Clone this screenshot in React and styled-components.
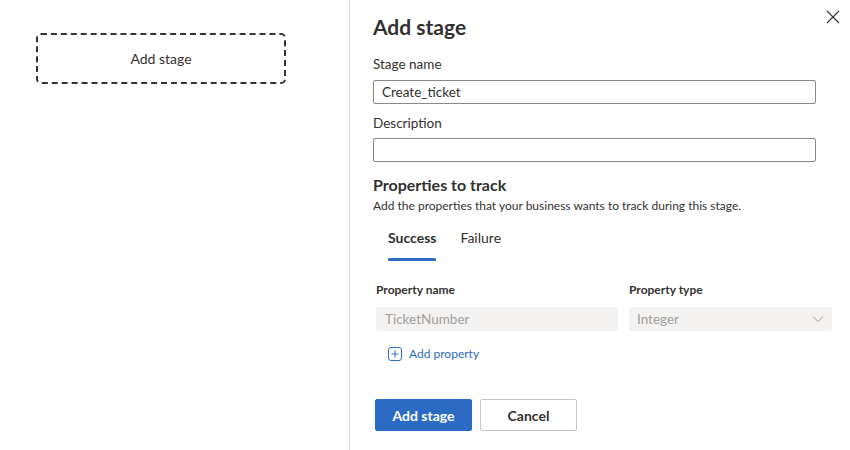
import React from "react";
import styled, { createGlobalStyle } from "styled-components";

const Global = createGlobalStyle`
  html, body { margin: 0; padding: 0; background: #fff; }
  body { font-family: "Segoe UI", Lato, "Noto Sans", sans-serif; color: #323130; }
  * { box-sizing: border-box; }
`;

const Page = styled.div`
  display: flex;
  width: 850px;
  height: 450px;
  overflow: hidden;
`;

const Canvas = styled.div`
  width: 350px;
  border-right: 1px solid #e1dfdd;
  padding: 33px 0 0 36px;
`;

const DashedStage = styled.div`
  width: 250px;
  height: 51px;
  border: 2px dashed #333;
  border-radius: 5px;
  display: flex;
  align-items: center;
  justify-content: center;
  font-size: 14px;
  color: #323130;
`;

const Panel = styled.div`
  position: relative;
  flex: 1;
  padding: 13px 0 0 23px;
  display: flex;
  flex-direction: column;
  align-items: flex-start;
`;

const Close = styled.button`
  position: absolute;
  top: 7px;
  right: 7px;
  width: 20px;
  height: 20px;
  border: 0;
  background: none;
  padding: 0;
  display: flex;
  align-items: center;
  justify-content: center;
`;

const Title = styled.h1`
  margin: 0;
  font-size: 21px;
  font-weight: 700;
  line-height: 28px;
  color: #323130;
`;

const Label = styled.label`
  display: block;
  font-size: 13.5px;
  line-height: 20px;
  margin-top: ${(p) => p.$mt}px;
  margin-bottom: ${(p) => p.$mb}px;
`;

const TextInput = styled.div`
  width: 443px;
  height: 24px;
  border: 1px solid #8a8886;
  border-radius: 2px;
  padding: 0 8px;
  font-size: 13.5px;
  line-height: 22px;
  color: #323130;
`;

const SectionTitle = styled.h2`
  margin: 12px 0 0;
  font-size: 16px;
  font-weight: 700;
  line-height: 22px;
`;

const SubText = styled.p`
  margin: 2px 0 0;
  font-size: 12px;
  line-height: 16px;
`;

const Tabs = styled.div`
  display: flex;
  margin: 14px 0 0 3px;
`;

const Tab = styled.div`
  padding: 0 12px;
  height: 33px;
  font-size: 14px;
  line-height: 20px;
  font-weight: ${(p) => (p.$active ? 700 : 400)};
  color: #323130;
  position: relative;
  &::after {
    content: "";
    position: absolute;
    left: 12px;
    right: 12px;
    bottom: 0;
    height: 3px;
    background: ${(p) => (p.$active ? "#2b6cc4" : "transparent")};
    border-radius: 1px;
  }
`;

const TableHead = styled.div`
  display: grid;
  grid-template-columns: 253px 203px;
  margin: 19px 0 0 3px;
  font-size: 12px;
  font-weight: 700;
  line-height: 20px;
`;

const Row = styled.div`
  display: grid;
  grid-template-columns: 242px 203px;
  column-gap: 11px;
  margin: 7px 0 0 3px;
`;

const DisabledField = styled.div`
  height: 24px;
  background: #f3f2f1;
  border-radius: 2px;
  color: #a19f9d;
  font-size: 13.5px;
  line-height: 24px;
  padding: 0 ${(p) => (p.$select ? 8 : 9)}px;
  display: flex;
  align-items: center;
  justify-content: space-between;
`;

const AddProperty = styled.div`
  display: flex;
  align-items: center;
  gap: 7px;
  margin: 15px 0 0 15px;
  font-size: 12px;
  color: #2b6cc4;
  line-height: 16px;
`;

const Buttons = styled.div`
  display: flex;
  gap: 8px;
  margin: 37px 0 0 2px;
`;

const Button = styled.button`
  width: 97px;
  height: 32px;
  border-radius: 2px;
  font-family: inherit;
  font-size: 14px;
  font-weight: 700;
  border: 1px solid ${(p) => (p.$primary ? "#2c6bc3" : "#c8c6c4")};
  background: ${(p) => (p.$primary ? "#2c6bc3" : "#fff")};
  color: ${(p) => (p.$primary ? "#fff" : "#323130")};
  padding: 0;
`;

export default function App() {
  return (
    <Page>
      <Global />
      <Canvas>
        <DashedStage>Add stage</DashedStage>
      </Canvas>
      <Panel>
        <Close aria-label="Close">
          <svg width="14" height="14" viewBox="0 0 14 14">
            <path d="M1 1L13 13M13 1L1 13" stroke="#323130" strokeWidth="1.1" />
          </svg>
        </Close>
        <Title>Add stage</Title>
        <Label $mt={13} $mb={6}>Stage name</Label>
        <TextInput>Create_ticket</TextInput>
        <Label $mt={9} $mb={5}>Description</Label>
        <TextInput />
        <SectionTitle>Properties to track</SectionTitle>
        <SubText>Add the properties that your business wants to track during this stage.</SubText>
        <Tabs>
          <Tab $active>Success</Tab>
          <Tab>Failure</Tab>
        </Tabs>
        <TableHead>
          <span>Property name</span>
          <span>Property type</span>
        </TableHead>
        <Row>
          <DisabledField>TicketNumber</DisabledField>
          <DisabledField $select>
            <span>Integer</span>
            <svg width="12" height="8" viewBox="0 0 12 8">
              <path d="M1 1.5L6 6.5L11 1.5" stroke="#a19f9d" fill="none" strokeWidth="1" />
            </svg>
          </DisabledField>
        </Row>
        <AddProperty>
          <svg width="14" height="14" viewBox="0 0 14 14">
            <rect x="0.5" y="0.5" width="13" height="13" rx="2.5" fill="none" stroke="#2b6cc4" />
            <path d="M7 3.5V10.5M3.5 7H10.5" stroke="#2b6cc4" strokeWidth="1" />
          </svg>
          <span>Add property</span>
        </AddProperty>
        <Buttons>
          <Button $primary>Add stage</Button>
          <Button>Cancel</Button>
        </Buttons>
      </Panel>
    </Page>
  );
}
